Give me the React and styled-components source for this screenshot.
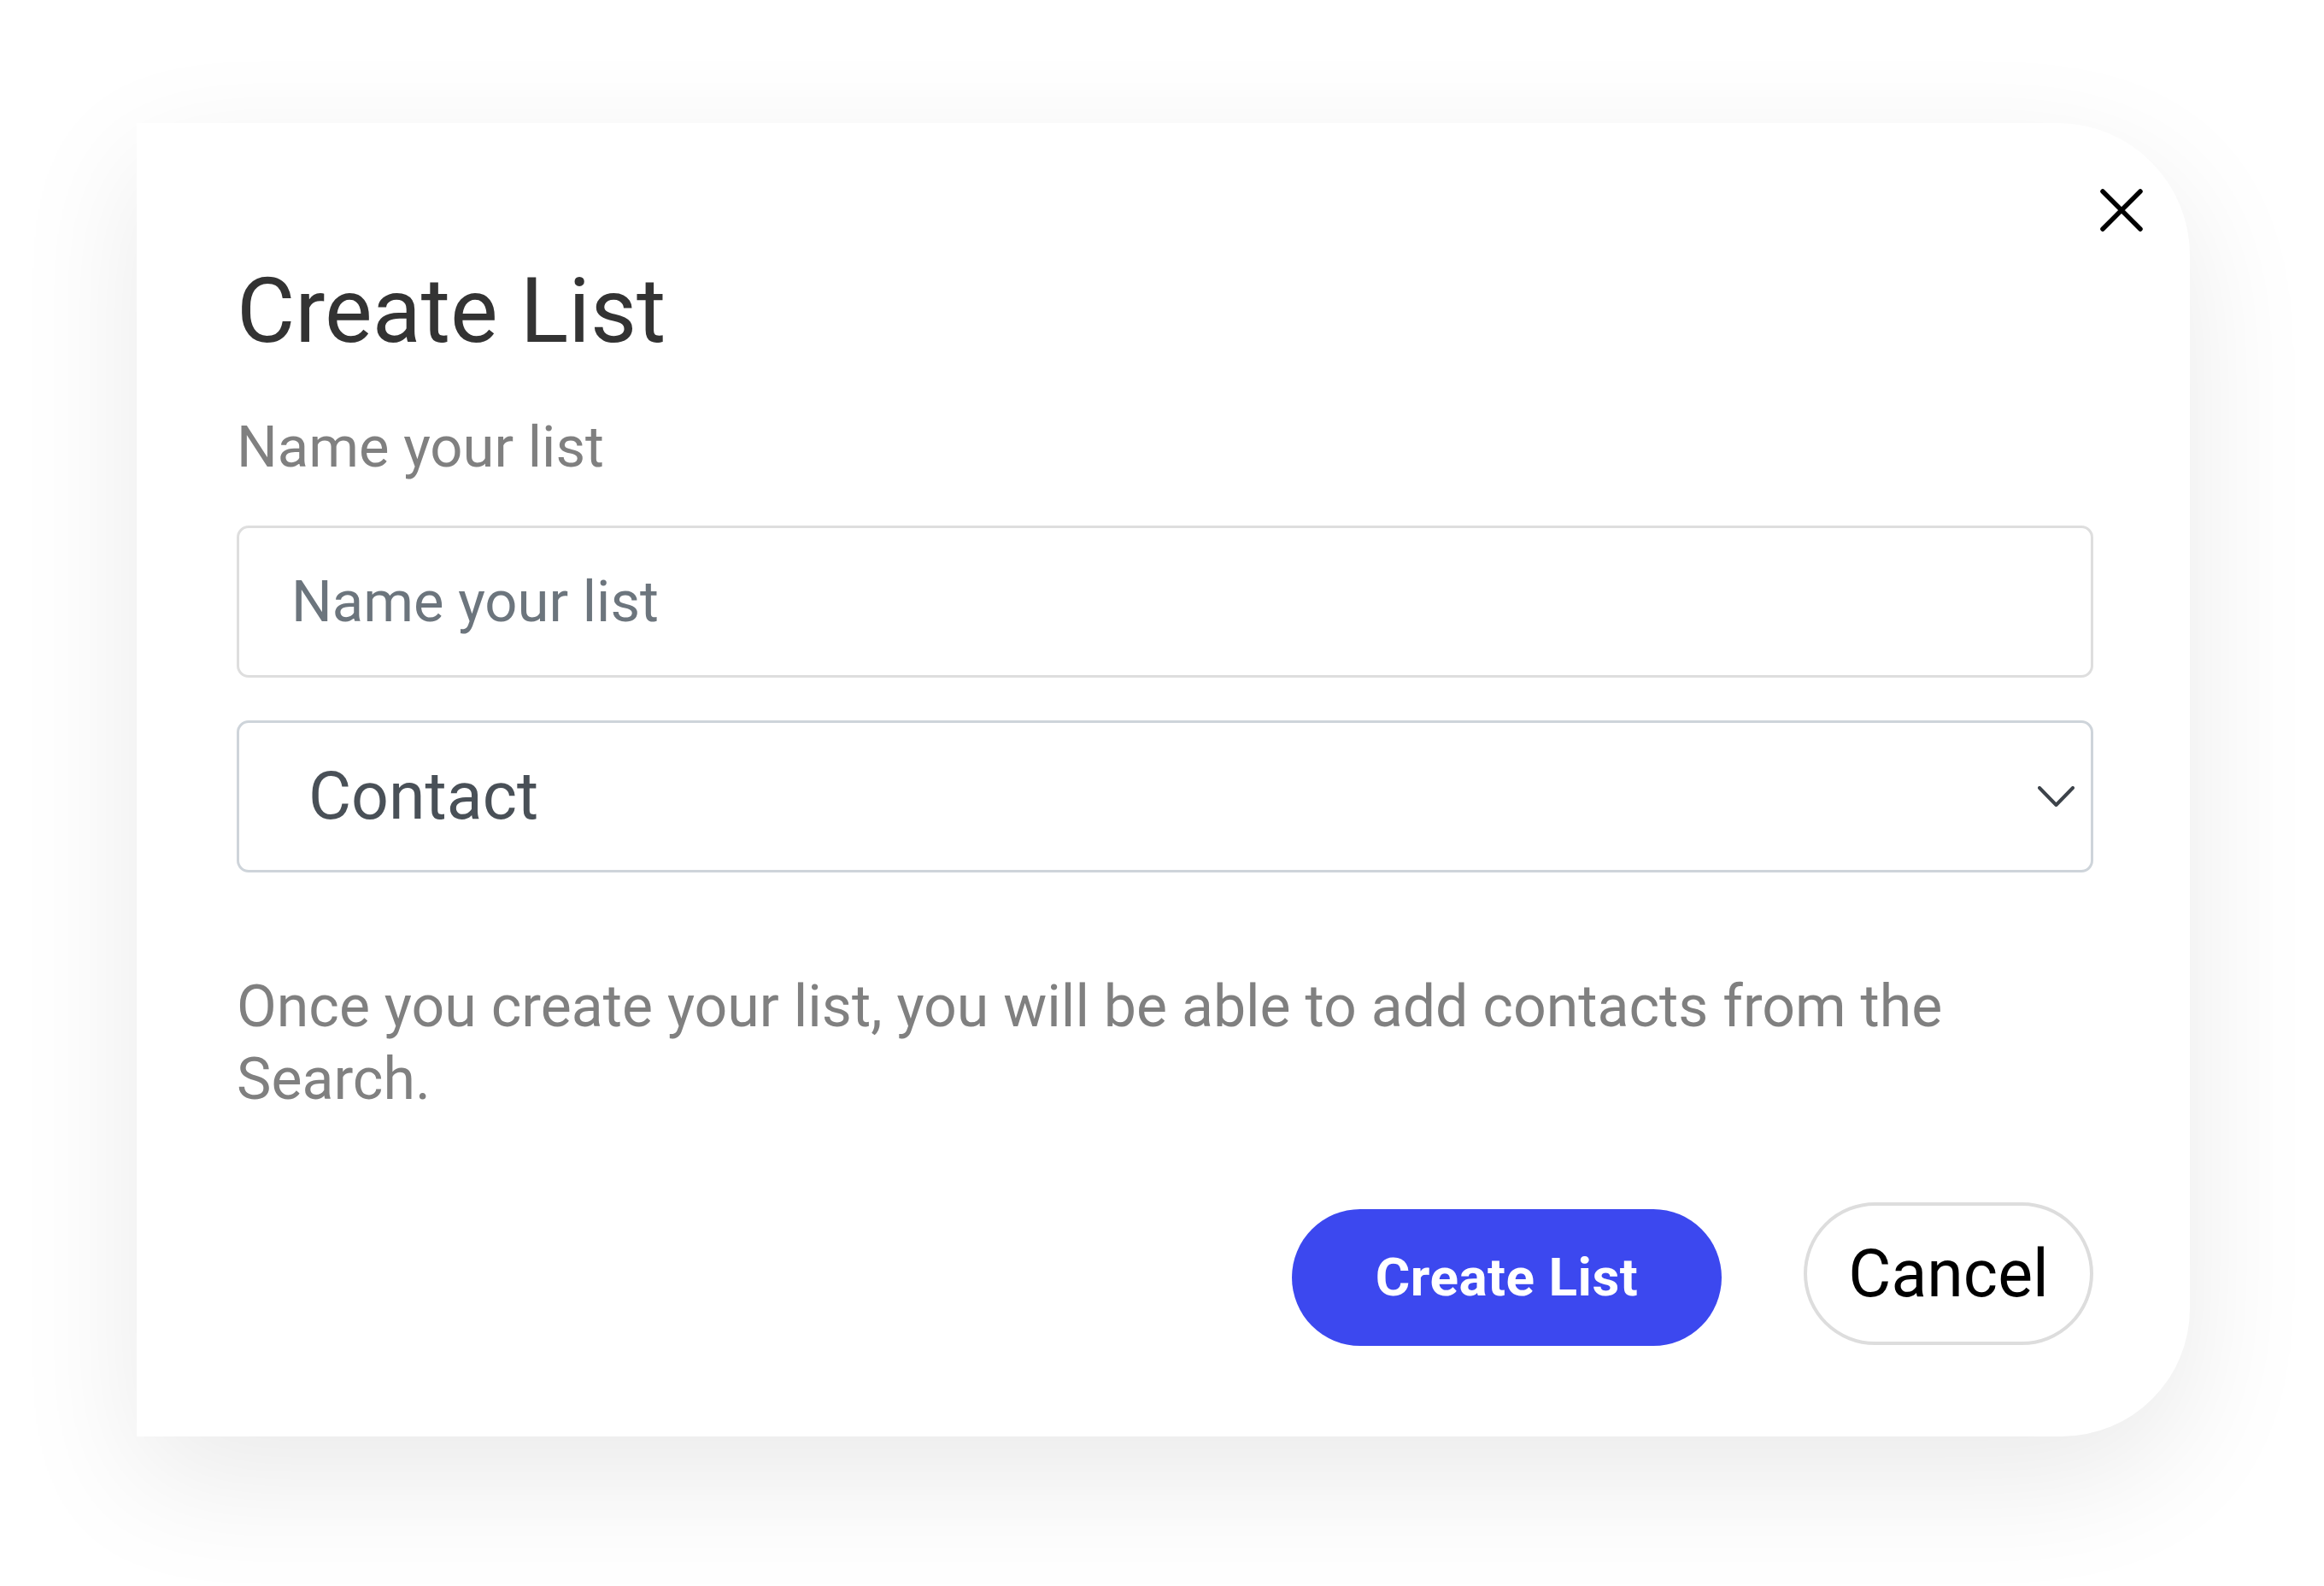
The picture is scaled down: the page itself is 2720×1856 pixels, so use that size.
import styled, { createGlobalStyle } from "styled-components";

const GlobalStyle = createGlobalStyle`
  html, body {
    margin: 0;
    padding: 0;
    background: #ffffff;
    font-family: Roboto, "Liberation Sans", Arial, sans-serif;
  }
  * {
    box-sizing: border-box;
  }
`;

const Page = styled.main`
  min-height: 1856px;
  padding: 144px 0 0 160px;
`;

const Card = styled.section`
  position: relative;
  width: 2403px;
  display: flex;
  flex-direction: column;
  padding: 158px 113px 99px 117px;
  background: #ffffff;
  border-radius: 0 155px 150px 0;
  box-shadow: 0 50px 150px rgba(0, 0, 0, 0.085);
`;

const CloseButton = styled.button`
  position: absolute;
  top: 76px;
  right: 54px;
  width: 52px;
  height: 52px;
  padding: 0;
  border: none;
  background: transparent;
  cursor: pointer;
  display: flex;
`;

const Title = styled.h2`
  margin: 0;
  font-size: 105px;
  line-height: 126px;
  font-weight: 400;
  color: #333333;
`;

const Label = styled.label`
  margin-top: 55px;
  font-size: 67px;
  line-height: 80px;
  color: #808080;
`;

const TextInput = styled.input`
  margin-top: 52px;
  width: 100%;
  height: 178px;
  padding: 0 61px;
  border: 3px solid #dedede;
  border-radius: 14px;
  font-family: inherit;
  font-size: 67px;
  color: #495057;
  outline: none;

  &::placeholder {
    color: #6c757d;
  }
`;

const SelectWrap = styled.div`
  position: relative;
  margin-top: 50px;
`;

const Select = styled.select`
  width: 100%;
  height: 178px;
  padding: 0 81px;
  border: 3px solid #ced4da;
  border-radius: 14px;
  background: #ffffff;
  font-family: inherit;
  font-size: 77px;
  color: #495057;
  appearance: none;
  -webkit-appearance: none;
  outline: none;
`;

const Chevron = styled.svg`
  position: absolute;
  right: 22px;
  top: 77px;
  pointer-events: none;
`;

const Hint = styled.p`
  margin: 115px 0 0;
  font-size: 68px;
  line-height: 85px;
  color: #808080;
`;

const Actions = styled.div`
  margin-top: 101px;
  display: flex;
  justify-content: flex-end;
  align-items: center;
  gap: 96px;
`;

const PrimaryButton = styled.button`
  width: 503px;
  height: 160px;
  border: none;
  border-radius: 80px;
  background: #3c48ef;
  color: #ffffff;
  font-family: inherit;
  font-size: 62px;
  font-weight: 700;
  letter-spacing: 0.5px;
  cursor: pointer;
`;

const GhostButton = styled.button`
  width: 339px;
  height: 167px;
  margin-bottom: 8px;
  border: 4px solid #dddddd;
  border-radius: 84px;
  background: #ffffff;
  color: #000000;
  font-family: inherit;
  font-size: 77px;
  cursor: pointer;
`;

const App = () => {
  return <Page>
    <GlobalStyle/>
    <Card>
      <CloseButton aria-label="Close">
        <svg width="52" height="52" viewBox="0 0 52 52">
          <path d="M4 4 L48 48 M48 4 L4 48" stroke="#000" strokeWidth="5.5" strokeLinecap="round" fill="none"/>
        </svg>
      </CloseButton>
      <Title>Create List</Title>
      <Label htmlFor="list-name">Name your list</Label>
      <TextInput id="list-name" placeholder="Name your list"/>
      <SelectWrap>
        <Select defaultValue="contact">
          <option value="contact">Contact</option>
        </Select>
        <Chevron width="43" height="25" viewBox="0 0 43 25">
          <polyline points="2,2 21.5,22 41,2" stroke="#3d434a" strokeWidth="4" fill="none" strokeLinecap="round" strokeLinejoin="round"/>
        </Chevron>
      </SelectWrap>
      <Hint>Once you create your list, you will be able to add contacts from the Search.</Hint>
      <Actions>
        <PrimaryButton>Create List</PrimaryButton>
        <GhostButton>Cancel</GhostButton>
      </Actions>
    </Card>
  </Page>
}

export default App;
